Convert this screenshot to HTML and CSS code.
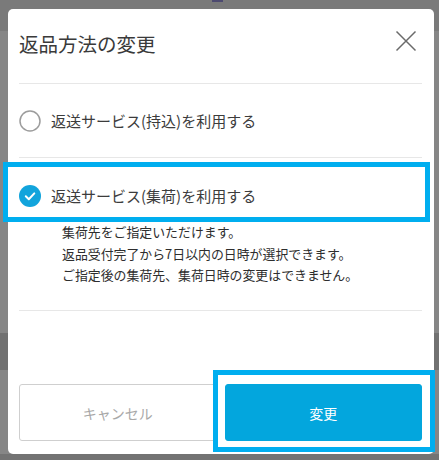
FILE: index.html
```html
<!DOCTYPE html>
<html lang="ja">
<head>
<meta charset="utf-8">
<link rel="stylesheet" href="styles.css">
</head>
<body>
<div class="page-mark"></div>
<div class="modal">
  <div class="modal-header">
    <h1 class="modal-title">返品方法の変更</h1>
    <button class="close-btn" aria-label="閉じる">
      <svg width="22" height="22" viewBox="0 0 22 22"><path d="M1.5 1.5 L20.5 20.5 M20.5 1.5 L1.5 20.5" stroke="#6a6a6a" stroke-width="1.5" fill="none"/></svg>
    </button>
  </div>
  <div class="option option-first">
    <div class="radio-row">
      <svg class="radio" width="22" height="22" viewBox="0 0 22 22"><circle cx="11" cy="11" r="10" fill="#fff" stroke="#9c9c9c" stroke-width="1.5"/></svg>
      <span class="radio-label">返送サービス(持込)を利用する</span>
    </div>
  </div>
  <div class="option option-second">
    <div class="radio-row">
      <svg class="radio" width="22" height="22" viewBox="0 0 22 22"><circle cx="11" cy="11" r="11" fill="#12a4dc"/><path d="M6.8 11.3 L9.8 14.2 L15.3 8.4" stroke="#fff" stroke-width="2" fill="none" stroke-linecap="round" stroke-linejoin="round"/></svg>
      <span class="radio-label">返送サービス(集荷)を利用する</span>
    </div>
    <p class="desc">集荷先をご指定いただけます。<br>返品受付完了から7日以内の日時が選択できます。<br>ご指定後の集荷先、集荷日時の変更はできません。</p>
  </div>
  <div class="footer">
    <button class="btn btn-cancel">キャンセル</button>
    <button class="btn btn-primary">変更</button>
  </div>
</div>
<div class="highlight highlight-option"></div>
<div class="highlight highlight-button"></div>
</body>
</html>
```
FILE: styles.css
```css
* { box-sizing: border-box; }
html, body { margin: 0; padding: 0; }
body {
  width: 439px;
  height: 460px;
  overflow: hidden;
  padding: 9px 5px 0 8px;
  font-family: "Noto Sans CJK JP", "Noto Sans", sans-serif;
  background: linear-gradient(to bottom,
    #7a7a7a 0, #7a7a7a 31px,
    #868686 31px, #868686 333px,
    #717171 333px, #717171 370px,
    #868686 370px, #868686 454px,
    #737373 454px);
  position: relative;
}
.page-mark {
  position: absolute;
  left: 212px;
  top: 0;
  width: 11px;
  height: 2px;
  background: #4d4a70;
}
.modal {
  width: 426px;
  height: 445px;
  background: #fff;
  border-radius: 5px;
  padding: 0 12px 0 11px;
  display: flex;
  flex-direction: column;
}
.modal-header {
  display: flex;
  justify-content: space-between;
  align-items: flex-start;
  padding: 21px 0 25px 0;
  border-bottom: 1px solid #e7e7e7;
}
.modal-title {
  margin: 0;
  font-size: 19.5px;
  line-height: 28px;
  font-weight: normal;
  color: #3a3a3a;
}
.close-btn {
  border: 0;
  background: none;
  padding: 0;
  margin: 0 5px 0 0;
  width: 22px;
  height: 22px;
  display: block;
}
.close-btn svg { display: block; }
.option {
  border-bottom: 1px solid #e7e7e7;
}
.option-first {
  padding: 26px 0 25px 0;
}
.option-second {
  padding: 27px 0 24px 0;
}
.radio-row {
  display: flex;
  align-items: center;
  gap: 10px;
  height: 22px;
}
.radio { display: block; flex: none; }
.radio-label {
  font-size: 15px;
  line-height: 22px;
  color: #3c3c3c;
}
.desc {
  margin: 14px 0 0 43px;
  font-size: 12.9px;
  line-height: 21.5px;
  color: #2e2e2e;
}
.footer {
  display: flex;
  gap: 8px;
  margin-top: auto;
  padding-bottom: 13px;
}
.btn {
  flex: 1;
  height: 57px;
  border-radius: 3px;
  font-family: inherit;
  font-size: 14px;
  padding: 0;
}
.btn-cancel {
  background: #fff;
  border: 1px solid #cfcfcf;
  color: #a8a8a8;
}
.btn-primary {
  background: #03a6dd;
  border: 1px solid #03a6dd;
  color: #fff;
}
.highlight {
  position: absolute;
  border: 5px solid #00aeef;
  pointer-events: none;
}
.highlight-option {
  left: 3px;
  top: 162px;
  width: 427px;
  height: 60px;
}
.highlight-button {
  left: 213px;
  top: 370px;
  width: 222px;
  height: 82px;
}
```
